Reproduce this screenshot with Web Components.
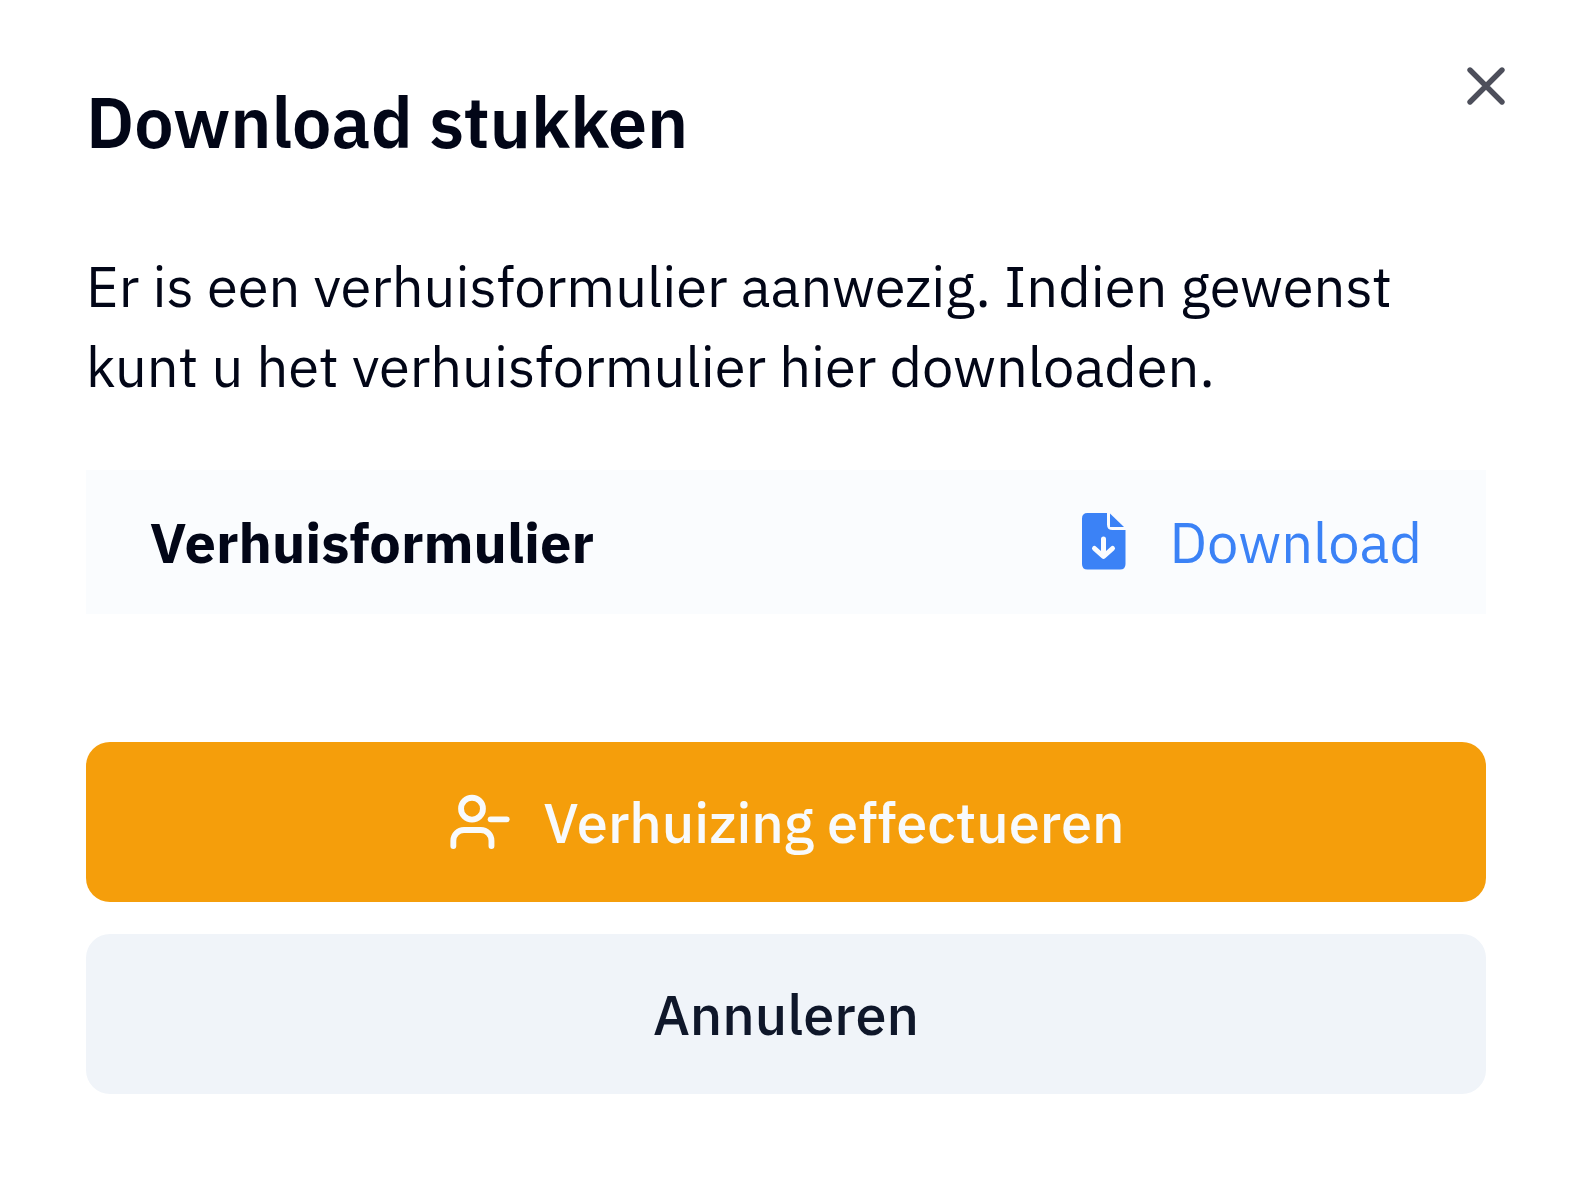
<!DOCTYPE html>
<html lang="nl">
<head>
<meta charset="utf-8">
<meta name="viewport" content="width=device-width, initial-scale=1">
<title>Download stukken</title>
<style>
  body {
    margin: 0;
    background: #fff;
    color: #020617;
    font: 400 56px/80px "IBM Plex Sans", "Noto Sans", Roboto, sans-serif;
  }
</style>
</head>
<body>
<dialog-panel>
  <span slot="title">Download stukken</span>
  <span slot="description">Er is een verhuisformulier aanwezig. Indien gewenst kunt u het verhuisformulier hier downloaden.</span>
  <file-row href="#verhuisformulier">Verhuisformulier</file-row>
  <action-button slot="actions" variant="primary"><user-minus-icon slot="icon"></user-minus-icon>Verhuizing effectueren</action-button>
  <action-button slot="actions">Annuleren</action-button>
</dialog-panel>

<script>
class BaseElement extends HTMLElement {
  constructor() {
    super();
    this.attachShadow({ mode: 'open' }).innerHTML = this.constructor.markup;
  }
}

class DialogPanel extends BaseElement {
  static markup = `
    <style>
      :host { display: block; position: relative; box-sizing: border-box; padding: 86px 90px 86px 86px; }
      section { display: flex; flex-direction: column; }
      h2 { margin: 0; font-size: 70px; line-height: 72px; font-weight: 600; }
      p { margin: 88px 0 64px; }
      footer { display: flex; flex-direction: column; gap: 32px; margin-top: 128px; }
      .close {
        position: absolute; top: 54px; right: 58px;
        margin: 0; padding: 0; border: 0; background: none;
        color: #020617; opacity: .7; cursor: pointer; line-height: 0;
      }
      .close svg { display: block; width: 64px; height: 64px; }
    </style>
    <section role="dialog" aria-labelledby="title" aria-describedby="description">
      <h2 id="title"><slot name="title"></slot></h2>
      <p id="description"><slot name="description"></slot></p>
      <slot></slot>
      <footer><slot name="actions"></slot></footer>
    </section>
    <button class="close" type="button" aria-label="Sluiten">
      <svg viewBox="0 0 24 24" fill="none" stroke="currentColor" stroke-width="2" stroke-linecap="round" stroke-linejoin="round"><path d="M18 6 6 18M6 6l12 12"/></svg>
    </button>`;
}

class FileRow extends BaseElement {
  static markup = `
    <style>
      :host { display: flex; align-items: center; justify-content: space-between; padding: 32px 64px; background: #fafcfe; }
      strong { font-weight: 700; }
      a { display: flex; align-items: center; gap: 44px; color: #3b82f6; text-decoration: none; }
      svg { display: block; width: 44px; height: 60px; }
    </style>
    <strong><slot></slot></strong>
    <a><svg viewBox="0 0 44 60" fill="currentColor" aria-hidden="true">
      <path d="M5.500 1H25V12.500Q25 18 30.500 18H43.500V52Q43.500 57.500 38 57.500H5.500Q0 57.500 0 52V6.500Q0 1 5.500 1Z"/>
      <path d="M28 1.500 42 15H28Z"/>
      <path d="M21.500 27v15M12.500 36.500l9 8L30.500 36.500" fill="none" stroke="#fafcfe" stroke-width="5" stroke-linecap="round" stroke-linejoin="round"/>
    </svg>Download</a>`;
  connectedCallback() {
    this.shadowRoot.querySelector('a').href = this.getAttribute('href');
  }
}

class ActionButton extends BaseElement {
  static markup = `
    <style>
      :host { display: block; }
      button {
        display: flex; align-items: center; justify-content: center; gap: 32px;
        width: 100%; margin: 0; padding: 40px 64px; border: 0; border-radius: 24px;
        font: inherit; font-weight: 500; cursor: pointer;
        background: #f0f4f9; color: #0f172a;
      }
      :host([variant="primary"]) button { background: #f59e0b; color: #f8fafc; }
    </style>
    <button type="button"><slot name="icon"></slot><span><slot></slot></span></button>`;
}

class UserMinusIcon extends BaseElement {
  static markup = `
    <style>
      :host { display: block; }
      svg { display: block; width: 64px; height: 64px; }
    </style>
    <svg viewBox="0 0 24 24" fill="none" stroke="currentColor" stroke-width="2.200" stroke-linecap="round" stroke-linejoin="round" aria-hidden="true">
      <path d="M16.300 21v-2a4 4 0 0 0-4-4H6a4 4 0 0 0-4 4v2"/><circle cx="9" cy="7" r="4.100"/><path d="M22 11h-6"/>
    </svg>`;
}

customElements.define('user-minus-icon', UserMinusIcon);
customElements.define('action-button', ActionButton);
customElements.define('file-row', FileRow);
customElements.define('dialog-panel', DialogPanel);
</script>
</body>
</html>
